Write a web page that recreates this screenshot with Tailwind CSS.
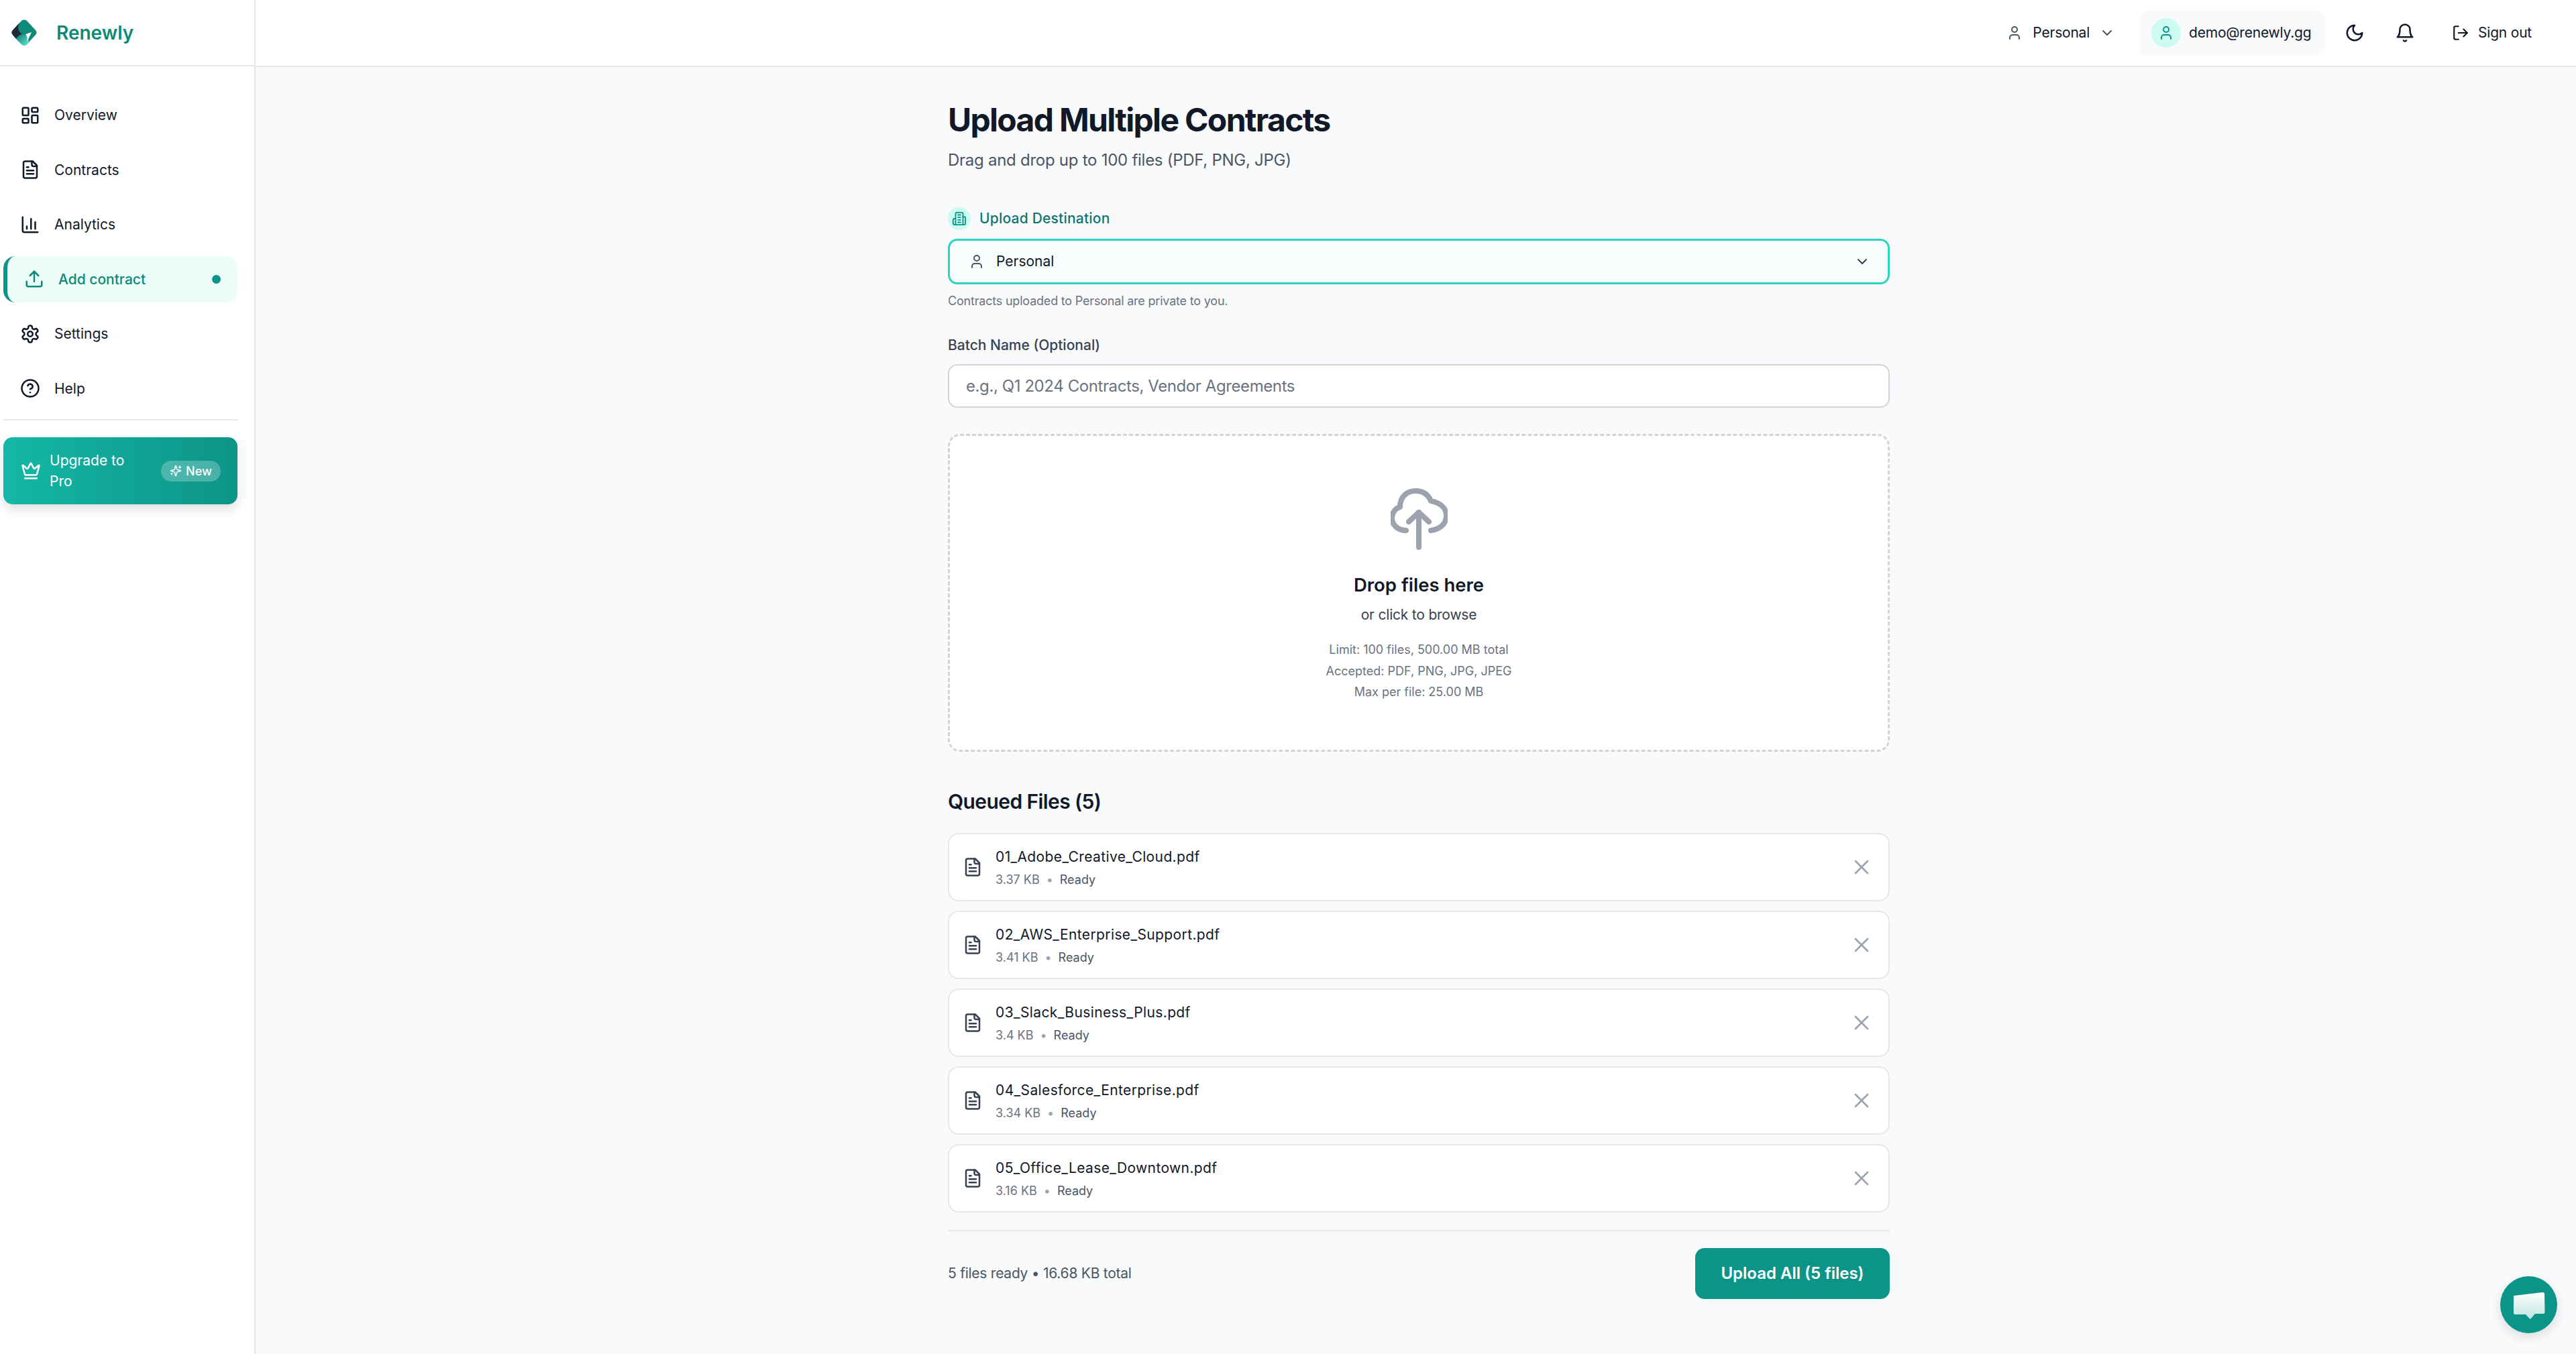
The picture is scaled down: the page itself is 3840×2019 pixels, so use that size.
<!DOCTYPE html>
<html lang="en">
<head>
  <meta charset="UTF-8">
  <title>Upload Multiple Contracts – Renewly</title>
  <script src="https://cdn.jsdelivr.net/npm/@tailwindcss/browser@4"></script>
</head>
<body class="bg-[#f9fafb] text-[#111827] font-['Inter',sans-serif] h-[2019px] overflow-hidden flex">

  <!-- icon sprites -->
  <svg class="hidden">
    <symbol id="i-file" viewBox="0 0 24 24" fill="none" stroke="currentColor" stroke-linecap="round" stroke-linejoin="round">
      <path d="M15 2H6a2 2 0 0 0-2 2v16a2 2 0 0 0 2 2h12a2 2 0 0 0 2-2V7Z"/><path d="M14 2v4a2 2 0 0 0 2 2h4"/><path d="M10 9H8"/><path d="M16 13H8"/><path d="M16 17H8"/>
    </symbol>
    <symbol id="i-x" viewBox="0 0 24 24" fill="none" stroke="currentColor" stroke-linecap="round" stroke-linejoin="round">
      <path d="M18 6 6 18"/><path d="m6 6 12 12"/>
    </symbol>
    <symbol id="i-user" viewBox="0 0 24 24" fill="none" stroke="currentColor" stroke-linecap="round" stroke-linejoin="round">
      <path d="M19 21v-2a4 4 0 0 0-4-4H9a4 4 0 0 0-4 4v2"/><circle cx="12" cy="7" r="4"/>
    </symbol>
    <symbol id="i-chev" viewBox="0 0 24 24" fill="none" stroke="currentColor" stroke-linecap="round" stroke-linejoin="round">
      <path d="m6 9 6 6 6-6"/>
    </symbol>
  </svg>

  <!-- SIDEBAR -->
  <aside class="w-[381px] shrink-0 h-full bg-white border-r-[2px] border-[#e5e7eb] flex flex-col">
    <div class="h-[99px] shrink-0 border-b-[2px] border-[#e5e7eb] flex items-center pl-[17px] gap-[29px]">
      <svg class="w-[38px] h-[40px]" viewBox="0 0 38 40">
        <defs>
          <linearGradient id="logoB" x1="0" y1="0" x2="1" y2="1"><stop offset="0" stop-color="#0f766e"/><stop offset="1" stop-color="#5eead4"/></linearGradient>
        </defs>
        <path d="M15 2 C17 0 21 0 23 2 L36 16 C38 18 38 21 36 23 L23 37 C21 39 17 39 15 37 L2 23 C0 21 0 18 2 16Z" fill="#0f8a78"/>
        <path d="M2 16 L12 5 C8 12 11 19 16 22 C12 24 9 26 7 29 L2 23 C0 21 0 18 2 16Z" fill="#1f2937"/>
        <path d="M7 29 C11 21 21 20 25 27 L26 34 L23 37 C21 39 17 39 15 37Z" fill="url(#logoB)"/>
        <path d="M21 22 L30 19 L23 34 C24 29 24 25 21 22Z" fill="#fff"/>
      </svg>
      <span class="text-[28px] font-semibold text-[#0d8a76] leading-none">Renewly</span>
    </div>

    <nav class="pl-[5px] pr-[25px] pt-[32px] flex flex-col">
      <a class="h-[81.5px] flex items-center pl-[25px] gap-[21px] text-[21px] text-[#111827]">
        <svg class="w-[30px] h-[30px]" viewBox="0 0 24 24" fill="none" stroke="currentColor" stroke-width="2" stroke-linecap="round" stroke-linejoin="round"><rect x="3" y="3" width="7" height="9" rx="1"/><rect x="14" y="3" width="7" height="5" rx="1"/><rect x="14" y="12" width="7" height="9" rx="1"/><rect x="3" y="16" width="7" height="5" rx="1"/></svg>
        Overview
      </a>
      <a class="h-[81.5px] flex items-center pl-[25px] gap-[21px] text-[21px] text-[#111827]">
        <svg class="w-[30px] h-[30px]" stroke-width="2"><use href="#i-file"/></svg>
        Contracts
      </a>
      <a class="h-[81.5px] flex items-center pl-[25px] gap-[21px] text-[21px] text-[#111827]">
        <svg class="w-[30px] h-[30px]" viewBox="0 0 24 24" fill="none" stroke="currentColor" stroke-width="2" stroke-linecap="round" stroke-linejoin="round"><path d="M3 3v16a2 2 0 0 0 2 2h16"/><path d="M18 17V9"/><path d="M13 17V5"/><path d="M8 17v-3"/></svg>
        Analytics
      </a>
      <a class="my-[6px] h-[69.5px] flex items-center pl-[25px] pr-[25px] gap-[21px] text-[21px] font-medium text-[#0d8a76] bg-[#ecfdf8] rounded-[18px] border-l-[6px] border-[#0d9488]">
        <svg class="w-[30px] h-[30px]" viewBox="0 0 24 24" fill="none" stroke="currentColor" stroke-width="2" stroke-linecap="round" stroke-linejoin="round"><path d="M21 15v4a2 2 0 0 1-2 2H5a2 2 0 0 1-2-2v-4"/><polyline points="17 8 12 3 7 8"/><line x1="12" y1="3" x2="12" y2="15"/></svg>
        <span class="flex-1">Add contract</span>
        <span class="w-[13px] h-[13px] rounded-full bg-[#0d9488]"></span>
      </a>
      <a class="h-[81.5px] flex items-center pl-[25px] gap-[21px] text-[21px] text-[#111827]">
        <svg class="w-[30px] h-[30px]" viewBox="0 0 24 24" fill="none" stroke="currentColor" stroke-width="2" stroke-linecap="round" stroke-linejoin="round"><path d="M12.22 2h-.44a2 2 0 0 0-2 2v.18a2 2 0 0 1-1 1.73l-.43.25a2 2 0 0 1-2 0l-.15-.08a2 2 0 0 0-2.73.73l-.22.38a2 2 0 0 0 .73 2.73l.15.1a2 2 0 0 1 1 1.72v.51a2 2 0 0 1-1 1.74l-.15.09a2 2 0 0 0-.73 2.73l.22.38a2 2 0 0 0 2.73.73l.15-.08a2 2 0 0 1 2 0l.43.25a2 2 0 0 1 1 1.73V20a2 2 0 0 0 2 2h.44a2 2 0 0 0 2-2v-.18a2 2 0 0 1 1-1.73l.43-.25a2 2 0 0 1 2 0l.15.08a2 2 0 0 0 2.73-.73l.22-.39a2 2 0 0 0-.73-2.73l-.15-.08a2 2 0 0 1-1-1.74v-.5a2 2 0 0 1 1-1.74l.15-.09a2 2 0 0 0 .73-2.73l-.22-.38a2 2 0 0 0-2.73-.73l-.15.08a2 2 0 0 1-2 0l-.43-.25a2 2 0 0 1-1-1.73V4a2 2 0 0 0-2-2z"/><circle cx="12" cy="12" r="3"/></svg>
        Settings
      </a>
      <a class="h-[81.5px] flex items-center pl-[25px] gap-[21px] text-[21px] text-[#111827]">
        <svg class="w-[30px] h-[30px]" viewBox="0 0 24 24" fill="none" stroke="currentColor" stroke-width="2" stroke-linecap="round" stroke-linejoin="round"><circle cx="12" cy="12" r="10"/><path d="M9.09 9a3 3 0 0 1 5.83 1c0 2-3 3-3 3"/><path d="M12 17h.01"/></svg>
        Help
      </a>
    </nav>

    <div class="ml-[5px] mr-[25px] mt-[5px] border-t-[2px] border-[#e5e7eb]"></div>

    <div class="ml-[5px] mr-[25px] mt-[25px] h-[100px] rounded-[14px] bg-gradient-to-r from-[#14b8a6] to-[#0d9488] shadow-[0_8px_16px_rgba(0,0,0,0.12)] flex items-center justify-between pl-[26px] pr-[25px] text-white">
      <svg class="w-[30px] h-[30px] shrink-0" viewBox="0 0 24 24" fill="none" stroke="currentColor" stroke-width="2" stroke-linecap="round" stroke-linejoin="round"><path d="M11.562 3.266a.5.5 0 0 1 .876 0L15.39 8.87a1 1 0 0 0 1.516.294L21.183 5.5a.5.5 0 0 1 .798.519l-2.834 10.246a1 1 0 0 1-.956.734H5.81a1 1 0 0 1-.957-.734L2.02 6.02a.5.5 0 0 1 .798-.519l4.276 3.664a1 1 0 0 0 1.516-.294z"/><path d="M5 21h14"/></svg>
      <span class="ml-[13px] w-[120px] mr-auto text-[21px] leading-[31px]">Upgrade to Pro</span>
      <span class="h-[31px] w-[89px] shrink-0 rounded-full bg-white/25 flex items-center justify-center gap-[6px] text-[18px] font-medium">
        <svg class="w-[18px] h-[18px]" viewBox="0 0 24 24" fill="none" stroke="currentColor" stroke-width="2" stroke-linecap="round" stroke-linejoin="round"><path d="M9.937 15.5A2 2 0 0 0 8.5 14.063l-6.135-1.582a.5.5 0 0 1 0-.962L8.5 9.936A2 2 0 0 0 9.937 8.5l1.582-6.135a.5.5 0 0 1 .963 0L14.063 8.5A2 2 0 0 0 15.5 9.937l6.135 1.581a.5.5 0 0 1 0 .964L15.5 14.063a2 2 0 0 0-1.437 1.437l-1.582 6.135a.5.5 0 0 1-.963 0z"/><path d="M20 3v4"/><path d="M22 5h-4"/><path d="M4 17v2"/><path d="M5 18H3"/></svg>
        New
      </span>
    </div>
  </aside>

  <div class="flex-1 min-w-0 flex flex-col">
    <!-- HEADER -->
    <header class="h-[100px] shrink-0 bg-white border-b-[2px] border-[#e5e7eb] flex items-center justify-end pr-[66px] text-[21px] tracking-[-0.01em]">
      <div class="flex items-center text-[#111827]">
        <svg class="w-[24px] h-[24px] text-[#4b5563]" stroke-width="2"><use href="#i-user"/></svg>
        <span class="ml-[15px]">Personal</span>
        <svg class="ml-[14px] w-[24px] h-[24px] text-[#4b5563]" stroke-width="2"><use href="#i-chev"/></svg>
      </div>
      <div class="ml-[35px] h-[69px] w-[278px] rounded-[16px] bg-[#f9fafb] flex items-center pl-[19px]">
        <span class="w-[44px] h-[44px] rounded-full bg-[#ccfbf1] flex items-center justify-center">
          <svg class="w-[24px] h-[24px] text-[#0d9488]" stroke-width="2"><use href="#i-user"/></svg>
        </span>
        <span class="ml-[12px]">demo@renewly.gg</span>
      </div>
      <svg class="ml-[29px] w-[30px] h-[30px]" viewBox="0 0 24 24" fill="none" stroke="currentColor" stroke-width="2" stroke-linecap="round" stroke-linejoin="round"><path d="M12 3a6 6 0 0 0 9 9 9 9 0 1 1-9-9Z"/></svg>
      <svg class="ml-[45px] w-[30px] h-[30px]" viewBox="0 0 24 24" fill="none" stroke="currentColor" stroke-width="2" stroke-linecap="round" stroke-linejoin="round"><path d="M6 8a6 6 0 0 1 12 0c0 7 3 9 3 9H3s3-2 3-9"/><path d="M10.3 21a1.94 1.94 0 0 0 3.4 0"/></svg>
      <svg class="ml-[55px] w-[26px] h-[26px]" viewBox="0 0 24 24" fill="none" stroke="currentColor" stroke-width="2" stroke-linecap="round" stroke-linejoin="round"><path d="M9 21H5a2 2 0 0 1-2-2V5a2 2 0 0 1 2-2h4"/><polyline points="16 17 21 12 16 7"/><line x1="21" y1="12" x2="9" y2="12"/></svg>
      <span class="ml-[13px]">Sign out</span>
    </header>

    <!-- MAIN -->
    <main class="flex-1 pl-[1032px]">
      <div class="w-[1404px]">
        <h1 class="mt-[49px] text-[48px] leading-[60px] font-bold tracking-[-0.035em]">Upload Multiple Contracts</h1>
        <p class="mt-[14px] text-[24px] leading-[32px] text-[#4b5563] tracking-[-0.011em]">Drag and drop up to 100 files (PDF, PNG, JPG)</p>

        <div class="mt-[54px] flex items-center gap-[13px]">
          <span class="w-[34px] h-[34px] rounded-full bg-[#ccfbf1] flex items-center justify-center">
            <svg class="w-[22px] h-[22px] text-[#0d9488]" viewBox="0 0 24 24" fill="none" stroke="currentColor" stroke-width="2" stroke-linecap="round" stroke-linejoin="round"><path d="M6 22V4a2 2 0 0 1 2-2h8a2 2 0 0 1 2 2v18Z"/><path d="M6 12H4a2 2 0 0 0-2 2v6a2 2 0 0 0 2 2h2"/><path d="M18 9h2a2 2 0 0 1 2 2v9a2 2 0 0 1-2 2h-2"/><path d="M10 6h4"/><path d="M10 10h4"/><path d="M10 14h4"/><path d="M10 18h4"/></svg>
          </span>
          <span class="text-[21px] font-medium text-[#0f766e] tracking-[0.01em]">Upload Destination</span>
        </div>

        <div class="mt-[13px] h-[68px] rounded-[14px] border-[3px] border-[#2dd4bf] bg-[#f7fdfc] flex items-center pl-[28px] pr-[26px] text-[21px]">
          <svg class="w-[24px] h-[24px] text-[#4b5563]" stroke-width="2"><use href="#i-user"/></svg>
          <span class="ml-[17px] flex-1">Personal</span>
          <svg class="w-[24px] h-[24px] text-[#374151]" stroke-width="2"><use href="#i-chev"/></svg>
        </div>
        <p class="mt-[14px] text-[18px] leading-[22px] text-[#6b7280] tracking-[-0.011em]">Contracts uploaded to Personal are private to you.</p>

        <label class="block mt-[40px] text-[21px] leading-[30px] font-medium text-[#374151]">Batch Name (Optional)</label>
        <div class="mt-[13px] h-[65px] rounded-[14px] border-[2px] border-[#d1d5db] bg-white flex items-center pl-[25px] text-[24px] text-[#6b7280] tracking-[-0.017em]">e.g., Q1 2024 Contracts, Vendor Agreements</div>

        <!-- drop zone -->
        <div class="mt-[39px] h-[474px] rounded-[18px] border-[3px] border-dashed border-[#d1d5db] bg-white flex flex-col items-center pt-[78px]">
          <svg class="w-[85px] h-[92px]" viewBox="0 0 85 92" fill="none" stroke="#9ca3af" stroke-width="8" stroke-linecap="round" stroke-linejoin="round">
            <path d="M60 63 C75 61 83 52 83 41 C83 30 75 22 60 19 C55 7 46 4 37 4 C25 4 14 12 14 28 C6 30 2 38 2 44 C2 54 10 63 23 63"/>
            <path d="M42 36 V88"/><path d="M27 50 L42 36 L57 50"/>
          </svg>
          <h3 class="mt-[35px] text-[27.5px] leading-[34px] font-semibold">Drop files here</h3>
          <p class="mt-[13px] text-[21px] leading-[30px] text-[#374151] tracking-[-0.01em]">or click to browse</p>
          <div class="mt-[21px] text-[18px] leading-[31.5px] text-[#6b7280] text-center">
            <p>Limit: 100 files, 500.00 MB total</p>
            <p>Accepted: PDF, PNG, JPG, JPEG</p>
            <p>Max per file: 25.00 MB</p>
          </div>
        </div>

        <h2 class="mt-[56px] text-[30px] leading-[36px] font-semibold tracking-[-0.02em]">Queued Files (5)</h2>

        <ul class="mt-[29px] flex flex-col gap-[14px]">
          <li class="h-[102px] rounded-[16px] border-[2px] border-[#e5e7eb] bg-white flex items-center pl-[20px] pr-[22px]">
            <svg class="w-[30px] h-[30px] text-[#374151]" stroke-width="2"><use href="#i-file"/></svg>
            <div class="ml-[19px] flex-1">
              <div class="text-[21px] leading-[30px] tracking-[0.018em]">01_Adobe_Creative_Cloud.pdf</div>
              <div class="mt-[7px] text-[18px] leading-[24px] text-[#6b7280] flex items-center">3.37 KB<span class="mx-[10px] text-[#9ca3af]">•</span><span class="text-[#4b5563]">Ready</span></div>
            </div>
            <svg class="w-[36px] h-[36px] text-[#9ca3af]" stroke-width="1.75"><use href="#i-x"/></svg>
          </li>
          <li class="h-[102px] rounded-[16px] border-[2px] border-[#e5e7eb] bg-white flex items-center pl-[20px] pr-[22px]">
            <svg class="w-[30px] h-[30px] text-[#374151]" stroke-width="2"><use href="#i-file"/></svg>
            <div class="ml-[19px] flex-1">
              <div class="text-[21px] leading-[30px] tracking-[0.018em]">02_AWS_Enterprise_Support.pdf</div>
              <div class="mt-[7px] text-[18px] leading-[24px] text-[#6b7280] flex items-center">3.41 KB<span class="mx-[10px] text-[#9ca3af]">•</span><span class="text-[#4b5563]">Ready</span></div>
            </div>
            <svg class="w-[36px] h-[36px] text-[#9ca3af]" stroke-width="1.75"><use href="#i-x"/></svg>
          </li>
          <li class="h-[102px] rounded-[16px] border-[2px] border-[#e5e7eb] bg-white flex items-center pl-[20px] pr-[22px]">
            <svg class="w-[30px] h-[30px] text-[#374151]" stroke-width="2"><use href="#i-file"/></svg>
            <div class="ml-[19px] flex-1">
              <div class="text-[21px] leading-[30px] tracking-[0.018em]">03_Slack_Business_Plus.pdf</div>
              <div class="mt-[7px] text-[18px] leading-[24px] text-[#6b7280] flex items-center">3.4 KB<span class="mx-[10px] text-[#9ca3af]">•</span><span class="text-[#4b5563]">Ready</span></div>
            </div>
            <svg class="w-[36px] h-[36px] text-[#9ca3af]" stroke-width="1.75"><use href="#i-x"/></svg>
          </li>
          <li class="h-[102px] rounded-[16px] border-[2px] border-[#e5e7eb] bg-white flex items-center pl-[20px] pr-[22px]">
            <svg class="w-[30px] h-[30px] text-[#374151]" stroke-width="2"><use href="#i-file"/></svg>
            <div class="ml-[19px] flex-1">
              <div class="text-[21px] leading-[30px] tracking-[0.018em]">04_Salesforce_Enterprise.pdf</div>
              <div class="mt-[7px] text-[18px] leading-[24px] text-[#6b7280] flex items-center">3.34 KB<span class="mx-[10px] text-[#9ca3af]">•</span><span class="text-[#4b5563]">Ready</span></div>
            </div>
            <svg class="w-[36px] h-[36px] text-[#9ca3af]" stroke-width="1.75"><use href="#i-x"/></svg>
          </li>
          <li class="h-[102px] rounded-[16px] border-[2px] border-[#e5e7eb] bg-white flex items-center pl-[20px] pr-[22px]">
            <svg class="w-[30px] h-[30px] text-[#374151]" stroke-width="2"><use href="#i-file"/></svg>
            <div class="ml-[19px] flex-1">
              <div class="text-[21px] leading-[30px] tracking-[0.018em]">05_Office_Lease_Downtown.pdf</div>
              <div class="mt-[7px] text-[18px] leading-[24px] text-[#6b7280] flex items-center">3.16 KB<span class="mx-[10px] text-[#9ca3af]">•</span><span class="text-[#4b5563]">Ready</span></div>
            </div>
            <svg class="w-[36px] h-[36px] text-[#9ca3af]" stroke-width="1.75"><use href="#i-x"/></svg>
          </li>
        </ul>

        <div class="mt-[26px] pt-[25px] border-t-[2px] border-[#e5e7eb] flex items-center justify-between">
          <span class="text-[21px] text-[#4b5563] tracking-[-0.012em]">5 files ready • 16.68 KB total</span>
          <button class="h-[76px] w-[290px] rounded-[14px] bg-[#0d9488] text-white text-[24px] font-semibold">Upload All (5 files)</button>
        </div>
      </div>
    </main>
  </div>

  <!-- chat bubble -->
  <div class="fixed left-[3727px] top-[1903px] w-[85px] h-[85px] rounded-full bg-[#0d9488] shadow-[0_6px_16px_rgba(0,0,0,0.12)] flex items-center justify-center">
    <svg class="w-[48px] h-[48px]" viewBox="0 0 48 48">
      <defs><linearGradient id="chatG" x1="0" y1="0" x2="0" y2="1"><stop offset="0" stop-color="#ffffff"/><stop offset="1" stop-color="#bfe6de"/></linearGradient></defs>
      <path d="M2 10 L44 5 C46 5 47 6 47 7 L47.500 35 C47.500 36 46.500 37 45.500 37 L33 37 L26.500 44.500 C26 45 25.500 45 25 44.500 L19 38 L3 38 C2 38 1 37 1 36 L1 11 C1 10.500 1.500 10 2 10Z" fill="url(#chatG)"/>
    </svg>
  </div>
</body>
</html>
